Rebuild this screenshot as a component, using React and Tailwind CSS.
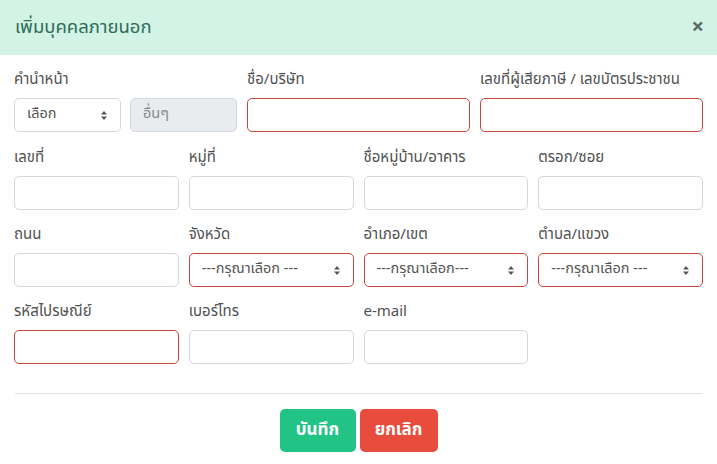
import React from 'react'

const FONT = { fontFamily: '"Noto Sans Thai", "Noto Sans", "Liberation Sans", sans-serif' }

function Label({ children }) {
    return <div className="text-[15px] text-[#505050] h-[22px] leading-[22px] mb-[7px] whitespace-nowrap">{children}</div>
}

function Input({ error }) {
    return (
        <input
            className={`block w-full h-[34px] rounded-[5px] border bg-white px-3 outline-none ${error ? 'border-[#c9473c]' : 'border-[#d4d7db]'}`}
        />
    )
}

function Chevrons() {
    return (
        <svg width="8" height="11" viewBox="0 0 8 11" className="shrink-0">
            <path d="M4 1 L7 4.5 H1 Z" fill="#555" />
            <path d="M4 10 L7 6.5 H1 Z" fill="#555" />
        </svg>
    )
}

function Select({ text, error }) {
    return (
        <div
            className={`flex items-center justify-between h-[34px] rounded-[5px] border bg-white pl-3 pr-[12px] text-[14.5px] text-[#555] ${error ? 'border-[#c9473c]' : 'border-[#d4d7db]'}`}
        >
            <span>{text}</span>
            <Chevrons />
        </div>
    )
}

function Field({ label, children }) {
    return (
        <div>
            <Label>{label}</Label>
            {children}
        </div>
    )
}

export default function App() {
    return (
        <div className="w-[717px] h-[464px] bg-white overflow-hidden" style={FONT}>
            {/* header */}
            <div className="h-[55px] bg-[#d2f3e6] flex items-center justify-between pl-[15px] pr-[13px]">
                <h1 className="text-[18.5px] text-[#2f6b58] leading-none">เพิ่มบุคคลภายนอก</h1>
                <span className="text-[22px] font-bold text-[#5d6b66] leading-none">×</span>
            </div>

            <div className="px-[14px] pt-[14px]">
                {/* row 1 */}
                <div className="grid grid-cols-3 gap-x-[10px]">
                    <div>
                        <Label>คำนำหน้า</Label>
                        <div className="grid grid-cols-2 gap-x-[9px]">
                            <Select text="เลือก" />
                            <div className="h-[34px] rounded-[5px] border border-[#d4d7db] bg-[#e9ecef] px-3 flex items-center text-[14.5px] text-[#888]">
                                อื่นๆ
                            </div>
                        </div>
                    </div>
                    <Field label="ชื่อ/บริษัท"><Input error /></Field>
                    <Field label="เลขที่ผู้เสียภาษี / เลขบัตรประชาชน"><Input error /></Field>
                </div>

                {/* rows 2-4 */}
                <div className="grid grid-cols-4 gap-x-[10px] gap-y-[14px] mt-[15px]">
                    <Field label="เลขที่"><Input /></Field>
                    <Field label="หมู่ที่"><Input /></Field>
                    <Field label="ชื่อหมู่บ้าน/อาคาร"><Input /></Field>
                    <Field label="ตรอก/ซอย"><Input /></Field>

                    <Field label="ถนน"><Input /></Field>
                    <Field label="จังหวัด"><Select text="---กรุณาเลือก ---" error /></Field>
                    <Field label="อำเภอ/เขต"><Select text="---กรุณาเลือก---" error /></Field>
                    <Field label="ตำบล/แขวง"><Select text="---กรุณาเลือก ---" error /></Field>

                    <Field label="รหัสไปรษณีย์"><Input error /></Field>
                    <Field label="เบอร์โทร"><Input /></Field>
                    <Field label="e-mail"><Input /></Field>
                </div>

                <div className="border-t border-[#e3e3e3] mt-[29px] mx-[1px]" />

                <div className="flex justify-center gap-[4px] pt-[15px]">
                    <button className="h-[43px] w-[76px] rounded-[5px] bg-[#22c486] text-white text-[17px] font-bold">บันทึก</button>
                    <button className="h-[43px] w-[78px] rounded-[5px] bg-[#e74c3c] text-white text-[17px] font-bold">ยกเลิก</button>
                </div>
            </div>
        </div>
    )
}
